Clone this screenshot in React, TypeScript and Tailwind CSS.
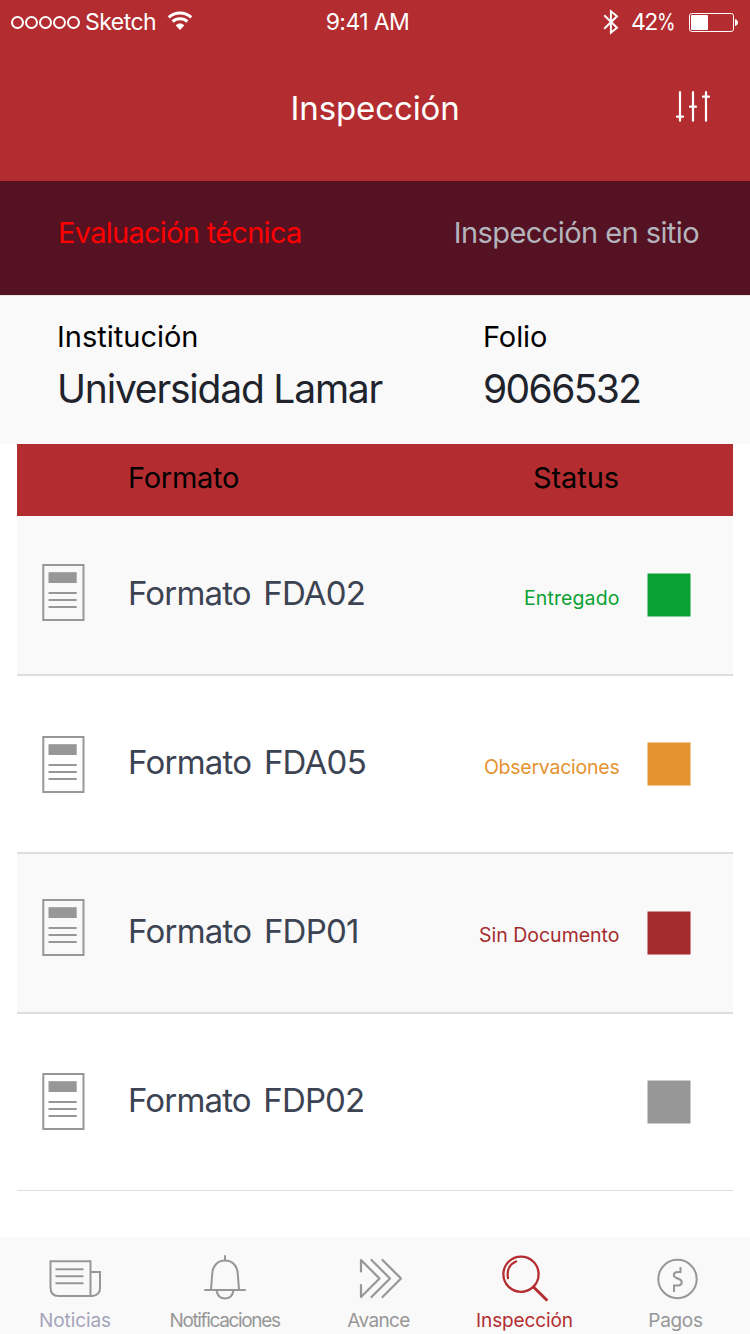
import React from 'react';

type IconProps = { className?: string };

function WifiIcon() {
  return (
    <svg width="26" height="20" viewBox="0 0 26 20" fill="none" stroke="#fff" strokeWidth="3.1">
      <path d="M1.7 6.3C8 .6 18 .6 24.3 6.3" />
      <path d="M5.6 10.5C9.8 6.8 16.2 6.8 20.4 10.5" />
      <path d="M13 19 8.8 14.4C11.2 12 14.8 12 17.2 14.4Z" fill="#fff" stroke="none" />
    </svg>
  );
}

function BluetoothIcon() {
  return (
    <svg width="16" height="26" viewBox="0 0 16 26" fill="none" stroke="#fff" strokeWidth="2">
      <path d="M1.2 6.2 14 18.7 7.9 23.7V2.3L14 7.3 1.2 19.8" />
    </svg>
  );
}

function BatteryIcon() {
  return (
    <svg width="50" height="19" viewBox="0 0 50 19">
      <rect x="0.5" y="0.5" width="44" height="18" rx="2.4" fill="none" stroke="#fff" />
      <rect x="2" y="2" width="17" height="15" rx="1" fill="#fff" />
      <path d="M46 6c4 1 4 6 0 7Z" fill="#fff" />
    </svg>
  );
}

function SlidersIcon() {
  return (
    <svg width="36" height="32" viewBox="0 0 36 32" stroke="#fff" strokeWidth="2.2" strokeLinecap="round">
      <path d="M5 1.2V29.7M18 1.2V29.7M31 1.2V29.7" />
      <path d="M2 25.7H8M15 15.7H21M28 5.7H34" />
    </svg>
  );
}

function DocumentIcon({ className = '' }: IconProps) {
  return (
    <svg className={className} width="43" height="57" viewBox="0 0 43 57">
      <rect x="1.3" y="1" width="40.2" height="55" fill="none" stroke="#979797" strokeWidth="2" />
      <path d="M6.5 8.2H34.7V19H6.5Z" fill="#979797" />
      <path d="M6.5 29H34.7M6.5 36H34.7M6.5 43H34.7" stroke="#979797" strokeWidth="2" />
    </svg>
  );
}

function NewsIcon() {
  return (
    <svg width="54" height="48" viewBox="0 0 54 48" fill="none" stroke="#979797" strokeWidth="2">
      <path d="M42.500 41V6.200H2.500V32.500Q2.500 41 10.500 41H44.500Q52 40 52 33V17H42.500" />
      <path d="M7.500 14.300H35.500M7.500 21.300H35.500M7.500 28.300H35.500" />
    </svg>
  );
}

function BellIcon() {
  return (
    <svg width="44" height="48" viewBox="0 0 44 48" fill="none" stroke="#979797" strokeWidth="2" strokeLinecap="round">
      <path d="M22 1V5.500M2 35H42M8 34.500L9.300 18C9.800 10.500 15 5.500 22 5.500S34.200 10.500 34.700 18L36 34.500" />
      <path d="M13.500 35.500C14.500 41 17.500 43.500 22 43.500S29.500 41 30.500 35.500" />
    </svg>
  );
}

function AdvanceIcon() {
  return (
    <svg width="44" height="48" viewBox="0 0 44 48" fill="none" stroke="#979797" strokeWidth="2.2" strokeLinecap="round" strokeLinejoin="round">
      <path d="M2 16.500V5L20.500 23.500 2 42V30" />
      <path d="M12.500 5 31 23.500 12.500 42M23.500 5 42 23.500 23.500 42" />
    </svg>
  );
}

function SearchIcon() {
  return (
    <svg width="48" height="48" viewBox="0 0 48 48" fill="none" stroke="#b32d30" strokeWidth="2.300" strokeLinecap="round">
      <circle cx="20" cy="19.200" r="17.600" />
      <path d="M7 23.200C5.500 15.500 8.500 9 15 6.500" strokeWidth="2.200" />
      <path d="M32.500 32 45.500 44.700" strokeWidth="3" />
    </svg>
  );
}

function MoneyIcon() {
  return (
    <svg width="42" height="48" viewBox="0 0 42 48" fill="none" stroke="#979797" strokeWidth="2">
      <circle cx="21.500" cy="24" r="19.200" />
      <path d="M24.500 12V17H22C17 17 16.500 21.500 20.500 23L23 24C27 25.500 26.500 30.500 22 30.500H18V37" />
    </svg>
  );
}

const rows = [
  {
    name: 'Formato FDA02', nameClass: 'tracking-[-0.83px]', status: 'Entregado',
    statusClass: 'text-[#0aa233] tracking-[0.1px] mt-[67px]', box: 'fill-[#0aa232]',
    row: 'h-[160px] border-b-2 bg-[#f9f9f9]', top: 'pt-0', icon: 'mt-[48px]',
  },
  {
    name: 'Formato FDA05', nameClass: 'tracking-[-0.75px]', status: 'Observaciones',
    statusClass: 'text-[#e59230] tracking-[-0.24px] mt-[67px]', box: 'fill-[#e59230]',
    row: 'h-[178px] border-b-2 bg-white', top: 'pt-[9px]', icon: 'mt-[51px]',
  },
  {
    name: 'Formato FDP01', nameClass: 'tracking-[-0.75px]', status: 'Sin Documento',
    statusClass: 'text-[#a52c2e] tracking-[0px] mt-[66px]', box: 'fill-[#a52c2e]',
    row: 'h-[160px] border-b-2 bg-[#f9f9f9]', top: 'pt-0', icon: 'mt-[45px]',
  },
  {
    name: 'Formato FDP02', nameClass: 'tracking-[-0.83px]', status: '',
    statusClass: '', box: 'fill-[#979797]',
    row: 'h-[177px] border-b bg-white', top: 'pt-[9px]', icon: 'mt-[50px]',
  },
];

const tabs = [
  { label: 'Noticias', icon: <NewsIcon />, cell: 'ml-[35px] w-[80px]', text: 'text-[#a6a3b9] tracking-[-0.09px]' },
  { label: 'Notificaciones', icon: <BellIcon />, cell: 'ml-[49px] w-[121px]', text: 'text-[#979797] tracking-[-1.35px]' },
  { label: 'Avance', icon: <AdvanceIcon />, cell: 'ml-[56px] w-[80px]', text: 'mr-[5px] text-[#979797] tracking-[-0.6px]' },
  { label: 'Inspección', icon: <SearchIcon />, cell: 'ml-[44px] w-[120px]', text: 'mr-[1px] text-[#b32d30] tracking-[-0.1px]' },
  { label: 'Pagos', icon: <MoneyIcon />, cell: 'ml-[52px] w-[80px]', text: 'mr-[3px] text-[#979797] tracking-[-0.3px]' },
];

export default function App() {
  return (
    <div className="flex h-[1334px] w-[750px] flex-col overflow-hidden bg-white font-['Inter','Noto_Sans',sans-serif]">
      <header className="h-[181px] bg-[#b32d30] text-white">
        <div className="grid h-[44px] grid-cols-3 items-center text-[23px]">
          <div className="flex items-center pl-[11px]">
            <div className="flex gap-[1px]">
              {[0, 1, 2, 3, 4].map((n) => (
                <span key={n} className="h-[13px] w-[13px] rounded-full border-2 border-white" />
              ))}
            </div>
            <span className="ml-[5px] tracking-[-0.54px]">Sketch</span>
            <span className="mb-[2px] ml-[11px]"><WifiIcon /></span>
          </div>
          <div className="pr-[15px] text-center tracking-[-0.6px]">9:41 AM</div>
          <div className="flex items-center justify-end pr-[11px]">
            <span className="mb-[1px]"><BluetoothIcon /></span>
            <span className="ml-[12px] mr-[16px] tracking-[-1.4px]">42<span className="inline-block w-[16px] origin-left scale-x-[0.82]">%</span></span>
            <BatteryIcon />
          </div>
        </div>
        <div className="grid h-[129px] grid-cols-[1fr_171px_1fr] items-center">
          <h1 className="col-start-2 pl-[1px] text-[33px] tracking-[-0.1px]">Inspección</h1>
          <div className="flex justify-end pb-[4px] pr-[39px]"><SlidersIcon /></div>
        </div>
      </header>

      <nav className="flex h-[114px] justify-between bg-[#551223] pl-[58px] pr-[51px] pt-[30px] text-[29px] leading-[44px]">
        <span className="tracking-[-0.72px] text-[#ff0000]">Evaluación técnica</span>
        <span className="tracking-[-0.58px] text-[#b4b5bc]">Inspección en sitio</span>
      </nav>

      <section className="grid h-[149px] grid-cols-[426px_1fr] border-t border-[#e8e5e6] bg-[#f9f9f9] pl-[57px] pt-[20px]">
        <div>
          <div className="text-[29px] leading-[42px] tracking-[0px] text-black">Institución</div>
          <div className="mt-[3px] text-[39px] leading-[56px] tracking-[-1.2px] text-[#20232c]">Universidad Lamar</div>
        </div>
        <div>
          <div className="text-[29px] leading-[42px] tracking-[-0.1px] text-black">Folio</div>
          <div className="mt-[3px] text-[39px] leading-[56px] tracking-[-1.6px] text-[#20232c]">9066532</div>
        </div>
      </section>

      <main className="mx-[17px]">
        <div className="flex h-[72px] justify-between bg-[#b32d30] pl-[111px] pr-[114px] pt-[12px] text-[29px] leading-[44px] text-black">
          <span className="tracking-[-0.27px]">Formato</span>
          <span className="tracking-[-0.07px]">Status</span>
        </div>
        {rows.map((r) => (
          <div key={r.name} className={`flex items-start border-[#dedede] pl-[25px] ${r.row} ${r.top}`}>
            <DocumentIcon className={r.icon} />
            <span className={`ml-[43px] mt-[55px] text-[33px] leading-[44px] text-[#3c4352] [word-spacing:4px] ${r.nameClass}`}>{r.name}</span>
            <span className={`ml-auto text-[19.5px] leading-[30px] ${r.statusClass}`}>{r.status}</span>
            <svg className="ml-[27.5px] mr-[42px] mt-[57px]" width="44" height="44" viewBox="0 0 44 44">
              <rect x="0.5" y="0.5" width="43" height="43" className={r.box} />
            </svg>
          </div>
        ))}
      </main>

      <footer className="mt-auto flex h-[97px] bg-[#f9f9f9]">
        {tabs.map((t) => (
          <div key={t.label} className={`flex flex-col items-center pt-[18px] [&>svg]:shrink-0 ${t.cell}`}>
            {t.icon}
            <span className={`mt-[5px] text-[19px] leading-[26px] ${t.text}`}>{t.label}</span>
          </div>
        ))}
      </footer>
    </div>
  );
}
